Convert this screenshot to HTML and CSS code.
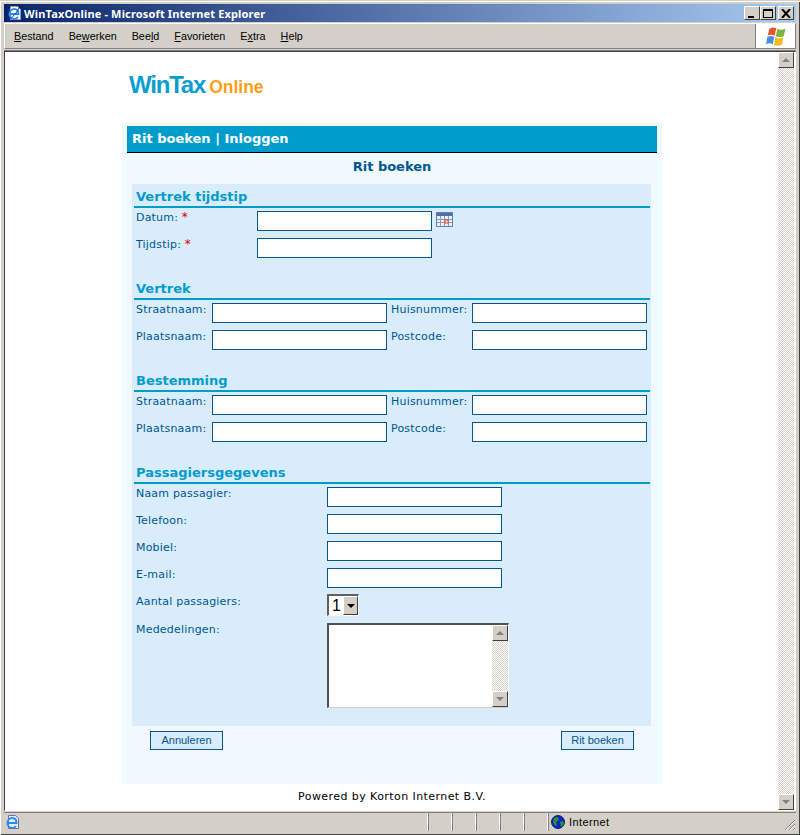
FILE: index.html
```html
<!DOCTYPE html>
<html lang="nl">
<head>
    <meta charset="UTF-8">
    <title>WinTaxOnline - Microsoft Internet Explorer</title>
    <link rel="stylesheet" href="styles.css">
</head>
<body>
    <div class="window">
        <div class="titlebar">
            <svg class="title-icon" width="16" height="16" viewBox="0 0 16 16">
                <path d="M4.500 1.500h7l3 3v10h-10z" fill="#fff" stroke="#9a9fc0"/>
                <path d="M4 9h8.500c0-3-1.800-5-4.300-5S3.500 6 3.500 9s2 5 4.700 5c1.600 0 2.800-.6 3.800-2" fill="none" stroke="#2a8cf0" stroke-width="2"/>
                <path d="M1 14c2 1.500 8-3 12-11" fill="none" stroke="#0b3fa8" stroke-width="1"/>
            </svg>
            <span class="title-text">WinTaxOnline - Microsoft Internet Explorer</span>
            <div class="title-buttons">
                <button class="win-btn"><span class="min-mark"></span></button>
                <button class="win-btn"><span class="max-mark"></span></button>
                <button class="win-btn close-btn">
                    <svg width="10" height="9" viewBox="0 0 10 9"><path d="M1 0l8 9M9 0L1 9" stroke="#000" stroke-width="2"/></svg>
                </button>
            </div>
        </div>

        <div class="menubar">
            <ul class="menu">
                <li><u>B</u>estand</li>
                <li>Be<u>w</u>erken</li>
                <li>Bee<u>l</u>d</li>
                <li><u>F</u>avorieten</li>
                <li>E<u>x</u>tra</li>
                <li><u>H</u>elp</li>
            </ul>
            <div class="flag-box">
                <svg width="20" height="19" viewBox="1 1.500 17.500 16.500">
                    <path d="M4 3c2-1.500 4-1.500 6-.5L8.500 9c-2-1-4-1-6 0z" fill="#e8552a"/>
                    <path d="M11 3c2 1 4 1 7 0l-1.500 6.500c-3 1-5 1-7 0z" fill="#7fb53c"/>
                    <path d="M2.200 10c2-1 4-1 6 0L7 16.500c-2-1-4-1-6 0z" fill="#4a90e2"/>
                    <path d="M9.200 10.500c2 1 4 1 7 0L15 17c-3 1-5 1-7 0z" fill="#f5b921"/>
                </svg>
            </div>
        </div>

        <div class="viewport">
            <div class="page">
                <div class="logo"><span class="logo-main">WinTax</span><span class="logo-sub">Online</span></div>

                <div class="panel">
                    <div class="panel-header">Rit boeken | Inloggen</div>
                    <h1 class="panel-title">Rit boeken</h1>

                    <form class="booking">
                        <section class="group">
                            <h2>Vertrek tijdstip</h2>
                            <div class="fields fields-time">
                                <label>Datum: <em>*</em></label>
                                <div class="with-icon">
                                    <input type="text">
                                    <svg class="cal-icon" width="17" height="16" viewBox="0 0 17 16">
                                        <rect x="0.500" y="1.500" width="16" height="14" fill="#e9eef8" stroke="#6f7f9c"/>
                                        <rect x="1" y="2" width="15" height="3" fill="#4a6fb0"/>
                                        <path d="M1 8.500h15M1 11.500h15M4.500 5v10M8.500 5v10M12.500 5v10" stroke="#8c9ab5"/>
                                        <rect x="9" y="9" width="3" height="3" fill="#fff" stroke="#e0402a"/>
                                    </svg>
                                </div>
                                <label>Tijdstip: <em>*</em></label>
                                <input type="text">
                            </div>
                        </section>

                        <section class="group">
                            <h2>Vertrek</h2>
                            <div class="fields fields-address">
                                <label>Straatnaam:</label>
                                <input type="text">
                                <label class="second">Huisnummer:</label>
                                <input type="text">
                                <label>Plaatsnaam:</label>
                                <input type="text">
                                <label class="second">Postcode:</label>
                                <input type="text">
                            </div>
                        </section>

                        <section class="group">
                            <h2>Bestemming</h2>
                            <div class="fields fields-address">
                                <label>Straatnaam:</label>
                                <input type="text">
                                <label class="second">Huisnummer:</label>
                                <input type="text">
                                <label>Plaatsnaam:</label>
                                <input type="text">
                                <label class="second">Postcode:</label>
                                <input type="text">
                            </div>
                        </section>

                        <section class="group group-last">
                            <h2>Passagiersgegevens</h2>
                            <div class="fields fields-passenger">
                                <label>Naam passagier:</label>
                                <input type="text">
                                <label>Telefoon:</label>
                                <input type="text">
                                <label>Mobiel:</label>
                                <input type="text">
                                <label>E-mail:</label>
                                <input type="text">
                                <label>Aantal passagiers:</label>
                                <div class="select-box">
                                    <span class="select-value">1</span>
                                    <span class="sb-btn"><i class="arrow-down arrow-black"></i></span>
                                </div>
                                <label>Mededelingen:</label>
                                <div class="memo">
                                    <textarea></textarea>
                                    <div class="scrollbar">
                                        <span class="sb-btn"><i class="arrow-up"></i></span>
                                        <span class="sb-track"></span>
                                        <span class="sb-btn"><i class="arrow-down"></i></span>
                                    </div>
                                </div>
                            </div>
                        </section>
                    </form>

                    <div class="actions">
                        <button type="button" class="action-btn">Annuleren</button>
                        <button type="button" class="action-btn">Rit boeken</button>
                    </div>
                </div>

                <p class="powered">Powered by Korton Internet B.V.</p>
            </div>
            <div class="scrollbar page-scroll">
                <span class="sb-btn"><i class="arrow-up"></i></span>
                <span class="sb-track"></span>
                <span class="sb-btn"><i class="arrow-down"></i></span>
            </div>
        </div>

        <div class="statusbar">
            <svg class="status-icon" width="16" height="16" viewBox="0 0 16 16">
                <path d="M4.500 1.500h7l3 3v10h-10z" fill="#e8ecfa" stroke="#6a70a8"/>
                <path d="M4 9h8.500c0-3-1.800-5-4.300-5S3.500 6 3.500 9s2 5 4.700 5c1.600 0 2.800-.6 3.800-2" fill="none" stroke="#2a8cf0" stroke-width="2"/>
            </svg>
            <div class="status-main"></div>
            <div class="status-cell"></div>
            <div class="status-cell"></div>
            <div class="status-cell"></div>
            <div class="status-cell"></div>
            <div class="status-cell"></div>
            <div class="status-zone">
                <svg width="14" height="14" viewBox="0 0 14 14">
                    <circle cx="7" cy="7" r="6.500" fill="#1420c8" stroke="#10206a"/>
                    <path d="M3 3l4-1 1 3-3 2 1 3-2 1-2-4zM9 7l3-1 1 3-3 3z" fill="#1f9a2e"/>
                </svg>
                <span>Internet</span>
            </div>
            <svg class="grip" width="12" height="12" viewBox="0 0 12 12">
                <path d="M11 1L1 11M11 5L5 11M11 9L9 11" stroke="#808080"/>
                <path d="M11 2L2 11M11 6L6 11M11 10L10 11" stroke="#fff"/>
            </svg>
        </div>
    </div>
</body>
</html>
```

FILE: styles.css
```css
* {
    box-sizing: border-box;
}

body {
    margin: 0;
    font-family: "DejaVu Sans", Verdana, sans-serif;
    font-size: 11px;
    background-color: #d4d0c8;
}

.window {
    width: 800px;
    height: 835px;
    display: flex;
    flex-direction: column;
    padding: 4px 4px 2px 4px;
    background-color: #d4d0c8;
    border-top: 1px solid #d4d0c8;
    box-shadow: inset 1px 1px 0 #fff, inset -1px -1px 0 #404040;
    overflow: hidden;
}

/* title bar */
.titlebar {
    height: 18px;
    margin-top: -1px;
    display: flex;
    align-items: center;
    flex-shrink: 0;
    padding: 0 2px;
    background: linear-gradient(to right, #0a246a, #a6caf0);
}

.title-text {
    margin-left: 2px;
    color: #fff;
    font-family: "Noto Sans", sans-serif;
    font-weight: bold;
    font-size: 11px;
    letter-spacing: 0.15px;
    flex: 1;
}

.title-buttons {
    display: flex;
}

.win-btn {
    width: 16px;
    height: 14px;
    padding: 0;
    display: flex;
    align-items: center;
    justify-content: center;
    background-color: #d4d0c8;
    border: 1px solid;
    border-color: #fff #404040 #404040 #fff;
}

.close-btn {
    margin-left: 2px;
}

.min-mark {
    width: 6px;
    height: 2px;
    margin-top: 7px;
    margin-right: 3px;
    background-color: #000;
}

.max-mark {
    width: 10px;
    height: 9px;
    border: 1px solid #000;
    border-top-width: 2px;
}

/* menu */
.menubar {
    height: 26px;
    margin-top: 1px;
    display: flex;
    justify-content: space-between;
    flex-shrink: 0;
    border: 1px solid;
    border-color: #fff #808080 #808080 #fff;
}

.menu {
    list-style: none;
    margin: 0;
    padding: 0 0 0 9px;
    display: flex;
    align-items: center;
    gap: 15px;
    font-family: "Liberation Sans", Arial, sans-serif;
    font-size: 10.8px;
    color: #000;
}

.flag-box {
    width: 40px;
    background-color: #fff;
    border-left: 1px solid #808080;
    display: flex;
    align-items: center;
    justify-content: center;
}

/* page area */
.viewport {
    flex: 1;
    min-height: 0;
    margin-top: 2px;
    display: flex;
    background-color: #fff;
    border-top: 1px solid #404040;
    border-left: 1px solid #404040;
    border-right: 1px solid #fff;
    border-bottom: 1px solid #fff;
    box-shadow: 0 -1px 0 #808080;
}

.page {
    flex: 1;
    min-width: 0;
    padding: 23px 0 0 117px;
}

.logo {
    height: 48px;
    padding-left: 7px;
    font-family: "Liberation Sans", Arial, sans-serif;
    font-weight: bold;
    line-height: 20px;
    white-space: nowrap;
}

.logo-main {
    font-size: 24px;
    color: #0a9ed0;
    letter-spacing: -1.2px;
}

.logo-sub {
    margin-left: 4px;
    font-size: 17.5px;
    color: #ff9e16;
}

.panel {
    width: 540px;
    height: 661px;
    padding: 3px 5px;
    background-color: #f0f9fe;
}

.panel-header {
    height: 27px;
    padding-left: 5px;
    line-height: 26px;
    font-size: 13px;
    font-weight: bold;
    color: #fff;
    background-color: #009ccc;
    border-bottom: 1px solid #000;
}

.panel-title {
    height: 31px;
    margin: 0;
    text-align: center;
    font-size: 13px;
    line-height: 27px;
    font-weight: bold;
    color: #00568f;
}

.booking {
    width: 519px;
    margin-left: 5px;
    background-color: #d8ecfc;
}

.group {
    height: 92px;
}

.group-last {
    height: 266px;
}

.group h2 {
    height: 24px;
    margin: 0 1px 0 2px;
    padding-left: 2px;
    font-size: 13px;
    line-height: 25px;
    font-weight: bold;
    color: #009ccc;
    border-bottom: 2px solid #009ccc;
}

.fields {
    margin-top: 3px;
    padding-left: 4px;
    display: grid;
    row-gap: 7px;
    grid-auto-rows: min-content;
    color: #00568f;
}

.fields-time {
    grid-template-columns: 121px 175px;
}

.fields-address {
    grid-template-columns: 76px 175px 85px 175px;
}

.fields-passenger {
    grid-template-columns: 191px 175px;
}

.fields label {
    line-height: 14px;
    letter-spacing: 0.2px;
}

.fields label.second {
    padding-left: 4px;
}

.fields em {
    font-style: normal;
    font-size: 12px;
    line-height: 0;
    color: #e00000;
}

.fields input {
    width: 175px;
    height: 20px;
    margin: 0;
    padding: 1px 3px;
    border: 1px solid #00568f;
    background-color: #fff;
    display: block;
}

.with-icon {
    display: flex;
    align-items: flex-start;
    width: 200px;
}

.cal-icon {
    margin-left: 4px;
    flex-shrink: 0;
}

/* select and textarea, old windows style */
.select-box {
    width: 32px;
    height: 22px;
    margin-top: -1px;
    display: flex;
    background-color: #fff;
    border-style: solid;
    border-width: 2px 1px 1px 2px;
    border-color: #606060 #fff #fff #606060;
    font-family: "Liberation Sans", sans-serif;
    font-weight: 300;
    font-size: 16px;
    color: #000;
}

.select-value {
    flex: 1;
    padding-left: 3px;
    line-height: 19px;
}

.memo {
    width: 182px;
    height: 85px;
    display: flex;
    background-color: #fff;
    border-style: solid;
    border-width: 2px 1px 1px 2px;
    border-color: #505050 #fff #d4d0c8 #505050;
}

.memo textarea {
    flex: 1;
    min-width: 0;
    margin: 0;
    padding: 2px;
    border: none;
    outline: none;
    resize: none;
    overflow: hidden;
}

.scrollbar {
    width: 16px;
    display: flex;
    flex-direction: column;
    flex-shrink: 0;
}

.page-scroll {
    width: 17px;
    padding-right: 1px;
}

.sb-track {
    flex: 1;
    background: repeating-conic-gradient(#d4d0c8 0 25%, #fff 0 50%) 0 0 / 2px 2px;
}

.sb-btn {
    width: 16px;
    height: 16px;
    flex-shrink: 0;
    display: flex;
    align-items: center;
    justify-content: center;
    background-color: #d4d0c8;
    border: 1px solid;
    border-color: #fff #404040 #404040 #fff;
}

.select-box .sb-btn {
    height: 19px;
    width: 15px;
}

.arrow-up,
.arrow-down {
    width: 0;
    height: 0;
    border-left: 4px solid transparent;
    border-right: 4px solid transparent;
}

.arrow-up {
    border-bottom: 4px solid #808080;
}

.arrow-down {
    border-top: 4px solid #808080;
}

.arrow-black {
    border-top-color: #000;
}

.actions {
    display: flex;
    justify-content: space-between;
    padding: 5px 23px 0 23px;
}

.action-btn {
    width: 73px;
    height: 19px;
    padding: 0 0 2px 0;
    font-family: "Liberation Sans", Arial, sans-serif;
    font-size: 11px;
    color: #00568f;
    background-color: #d8ecfc;
    border: 1px solid #00568f;
}

.powered {
    width: 540px;
    margin: 6px 0 0 0;
    text-align: center;
    line-height: 14px;
    color: #000;
    letter-spacing: 0.43px;
}

/* status bar */
.statusbar {
    height: 18px;
    margin-top: 2px;
    margin-bottom: 2px;
    display: flex;
    align-items: stretch;
    flex-shrink: 0;
    font-family: "Liberation Sans", Arial, sans-serif;
    font-size: 11px;
    color: #000;
    box-shadow: 0 -1px 0 #808080;
    position: relative;
}

.status-icon {
    margin-top: 1px;
    flex-shrink: 0;
}

.status-main {
    flex: 1;
    border-right: 1px solid #fff;
}

.status-cell {
    width: 24px;
    border-left: 1px solid #808080;
    border-right: 1px solid #fff;
}

.status-zone {
    width: 248px;
    padding-left: 2px;
    display: flex;
    align-items: center;
    gap: 4px;
    letter-spacing: 0.4px;
    border-left: 1px solid #808080;
}

.grip {
    position: absolute;
    right: 0;
    bottom: 0;
}
```
